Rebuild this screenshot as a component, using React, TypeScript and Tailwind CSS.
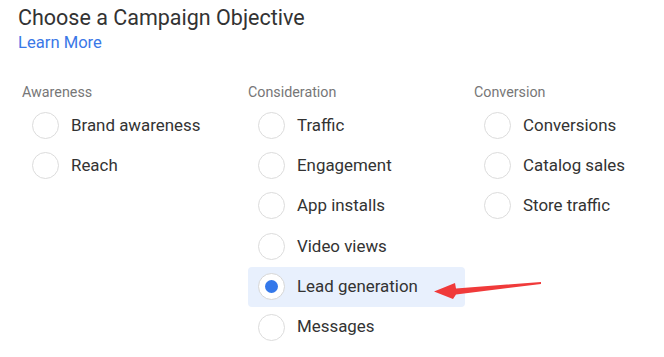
import React from "react";

type Opt = { label: string; selected?: boolean };

const cols: { title: string; items: Opt[] }[] = [
  { title: "Awareness", items: [{ label: "Brand awareness" }, { label: "Reach" }] },
  {
    title: "Consideration",
    items: [
      { label: "Traffic" },
      { label: "Engagement" },
      { label: "App installs" },
      { label: "Video views" },
      { label: "Lead generation", selected: true },
      { label: "Messages" },
    ],
  },
  {
    title: "Conversion",
    items: [{ label: "Conversions" }, { label: "Catalog sales" }, { label: "Store traffic" }],
  },
];

function Radio({ selected }: { selected?: boolean }) {
  return (
    <div
      className={
        "w-[27px] h-[27px] rounded-full border-[1.5px] flex items-center justify-center shrink-0 bg-white " +
        (selected ? "border-[#d6d6d6]" : "border-[#dcdcdc]")
      }
    >
      {selected && <div className="w-[13px] h-[13px] rounded-full bg-[#3478ea]" />}
    </div>
  );
}

export default function App() {
  return (
    <div
      className="relative w-[664px] h-[357px] bg-white overflow-hidden"
      style={{ fontFamily: "Roboto, 'Liberation Sans', sans-serif" }}
    >
      <div className="pl-[18px] pt-[4px]">
        <div className="text-[21.5px] leading-[28px] text-[#333333]">Choose a Campaign Objective</div>
        <div className="text-[16.6px] leading-[20px] text-[#3b78e7] mt-[1px]">Learn More</div>
      </div>
      <div className="grid grid-cols-[226px_226px_1fr] pl-[22px] mt-[30px]">
        {cols.map((c) => (
          <div key={c.title} className="flex flex-col">
            <div className="text-[14.3px] leading-[18px] text-[#777777] mb-[4px]">{c.title}</div>
            <div className="flex flex-col">
              {c.items.map((it) => (
                <div
                  key={it.label}
                  className={
                    "flex items-center gap-[12px] h-[40.4px] w-[217px] pl-[10px] rounded-[4px] " +
                    (it.selected ? "bg-[#e8f0fd]" : "")
                  }
                >
                  <Radio selected={it.selected} />
                  <span className="text-[16.9px] text-[#333333]">{it.label}</span>
                </div>
              ))}
            </div>
          </div>
        ))}
      </div>
      <svg className="absolute left-0 top-0 pointer-events-none" width="664" height="357">
        <polygon
          points="541,282 456,288.5 455,283 434,291.5 453,299 456,294.5 541,284"
          fill="#f03a3a"
        />
      </svg>
    </div>
  );
}
